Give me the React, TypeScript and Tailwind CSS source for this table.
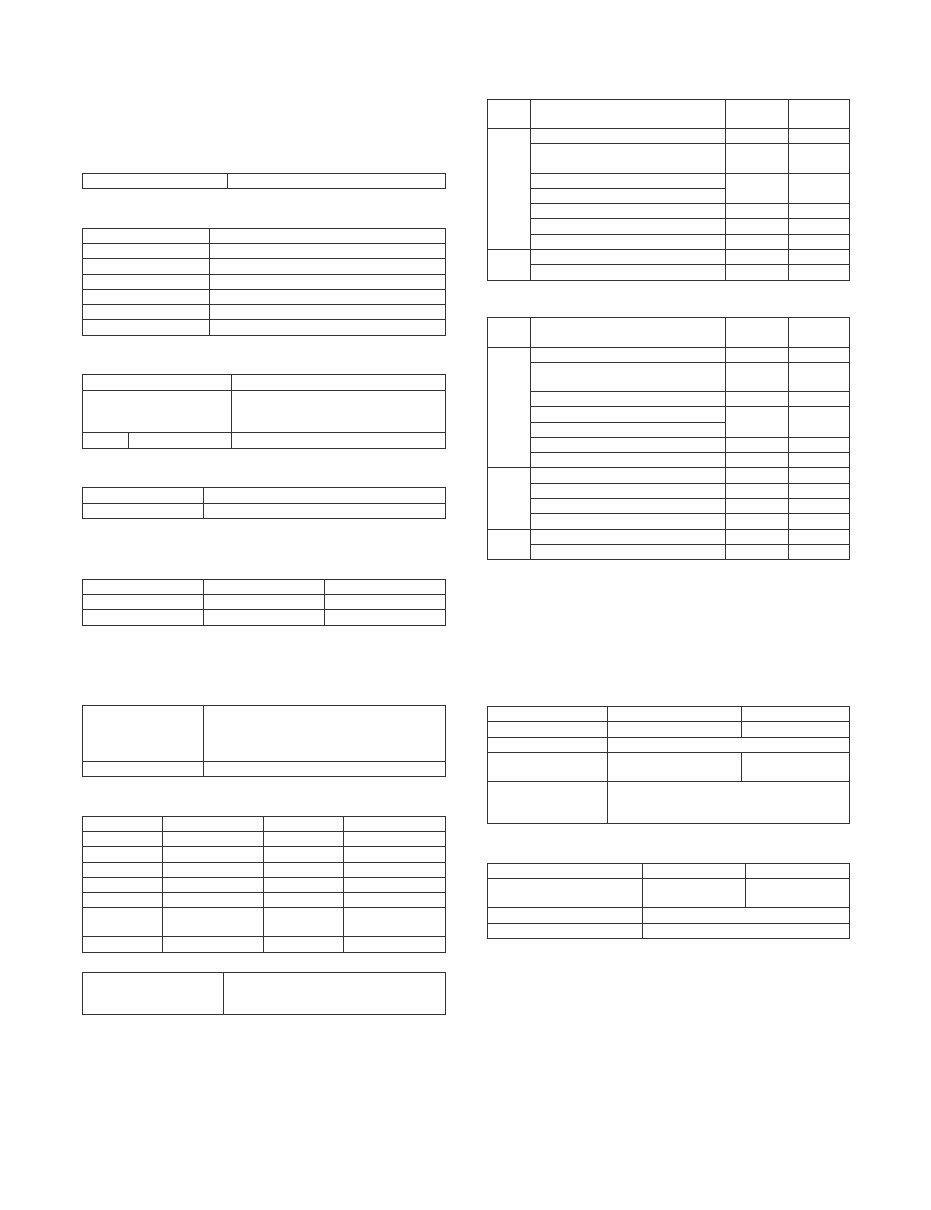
import React from "react";

const C = ({ className = "" }: { className?: string }) => <div className={"bg-white " + className} />;

const grid = "grid gap-px p-px bg-[#333]";

export default function App() {
  return (
    <div className="min-h-[1210px] w-[931px] bg-white flex pl-[82px]" style={{ fontFamily: '"Liberation Sans", Arial, sans-serif' }}>
      {/* Left column */}
      <div className="w-[364px] flex flex-col">
        {/* T1 */}
        <div className={grid + " mt-[173px] grid-cols-[144px_217px] grid-rows-[14px]"}>
          <C /><C />
        </div>
        {/* T2 */}
        <div className={grid + " mt-[39px] grid-cols-[126px_235px] grid-rows-[14px_14px_15px_14px_14px_14px_15px]"}>
          <C /><C /><C /><C /><C /><C /><C /><C /><C /><C /><C /><C /><C /><C />
        </div>
        {/* T3 */}
        <div className={grid + " mt-[38px] grid-cols-[45px_102px_213px] grid-rows-[15px_41px_15px]"}>
          <C className="col-span-2" /><C />
          <C className="col-span-2" /><C />
          <C /><C /><C />
        </div>
        {/* T4 */}
        <div className={grid + " mt-[38px] grid-cols-[120px_241px] grid-rows-[15px_14px]"}>
          <C /><C /><C /><C />
        </div>
        {/* T5 */}
        <div className={grid + " mt-[60px] grid-cols-[120px_120px_120px] grid-rows-[14px_14px_15px]"}>
          <C /><C /><C /><C /><C /><C /><C /><C /><C />
        </div>
        {/* T6 */}
        <div className={grid + " mt-[79px] grid-cols-[120px_241px] grid-rows-[55px_14px]"}>
          <C /><C /><C /><C />
        </div>
        {/* T7 */}
        <div className={grid + " mt-[39px] grid-cols-[79px_100px_79px_101px] grid-rows-[14px_14px_15px_14px_14px_14px_28px_15px]"}>
          {Array.from({ length: 32 }).map((_, i) => (
            <C key={i} />
          ))}
        </div>
        {/* T8 */}
        <div className={grid + " mt-[19px] grid-cols-[140px_221px] grid-rows-[41px]"}>
          <C /><C />
        </div>
      </div>

      {/* Right column */}
      <div className="ml-[41px] w-[363px] flex flex-col">
        {/* A */}
        <div className={grid + " mt-[99px] grid-cols-[42px_194px_62px_60px] grid-rows-[28px_14px_29px_14px_14px_14px_15px_14px_14px_15px]"}>
          <C /><C /><C /><C />
          <C className="row-span-7" /><C /><C /><C />
          <C /><C /><C />
          <C /><C className="row-span-2" /><C className="row-span-2" />
          <C />
          <C /><C /><C />
          <C /><C /><C />
          <C /><C /><C />
          <C className="row-span-2" /><C /><C /><C />
          <C /><C /><C />
        </div>
        {/* B */}
        <div className={grid + " mt-[36px] grid-cols-[42px_194px_62px_60px] grid-rows-[29px_14px_28px_14px_15px_14px_14px_14px_15px_14px_14px_15px_14px_14px]"}>
          <C /><C /><C /><C />
          <C className="row-span-7" /><C /><C /><C />
          <C /><C /><C />
          <C /><C /><C />
          <C /><C className="row-span-2" /><C className="row-span-2" />
          <C />
          <C /><C /><C />
          <C /><C /><C />
          <C className="row-span-4" /><C /><C /><C />
          <C /><C /><C />
          <C /><C /><C />
          <C /><C /><C />
          <C className="row-span-2" /><C /><C /><C />
          <C /><C /><C />
        </div>
        {/* C */}
        <div className={grid + " mt-[146px] grid-cols-[119px_133px_107px] grid-rows-[14px_15px_14px_28px_41px]"}>
          <C /><C /><C />
          <C /><C /><C />
          <C /><C className="col-span-2" />
          <C /><C /><C />
          <C /><C className="col-span-2" />
        </div>
        {/* D */}
        <div className={grid + " mt-[39px] grid-cols-[154px_102px_103px] grid-rows-[14px_28px_15px_14px]"}>
          <C /><C /><C />
          <C /><C /><C />
          <C /><C className="col-span-2" />
          <C /><C className="col-span-2" />
        </div>
      </div>
    </div>
  );
}
